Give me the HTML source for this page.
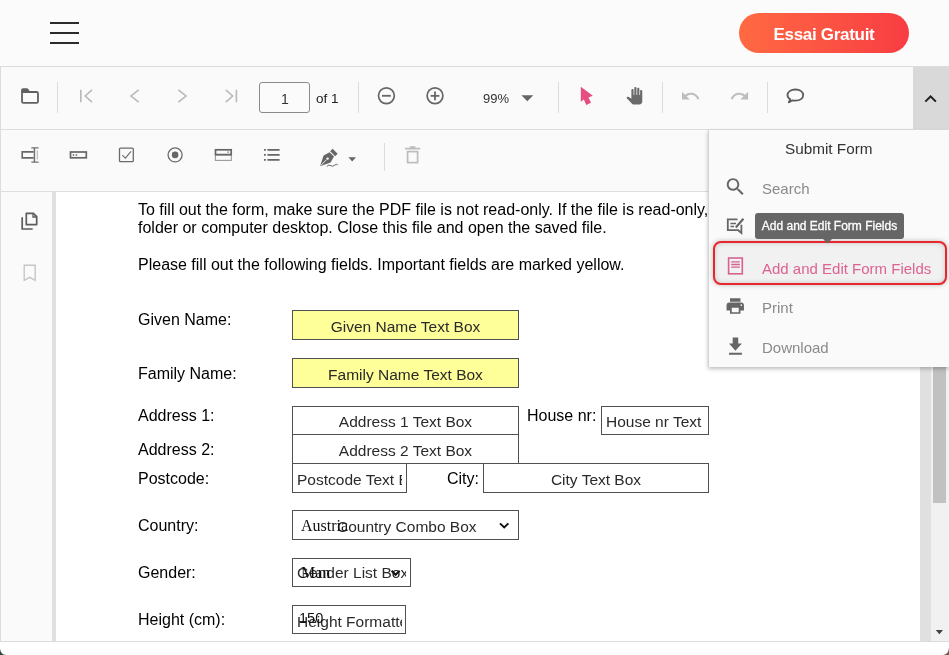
<!DOCTYPE html>
<html lang="en">
<head>
<meta charset="utf-8">
<title>PDF Form Editor</title>
<style>
*{box-sizing:border-box;margin:0;padding:0}
html,body{width:949px;height:655px;overflow:hidden;background:#fff;font-family:"Liberation Sans",sans-serif;}
body{position:relative}
.abs{position:absolute}
#header{left:0;top:0;width:949px;height:66px;background:#fbfbfb}
#hline{left:0;top:66px;width:949px;height:1px;background:#dcdcdc}
.bar{position:absolute;background:#fff;height:2px;left:50px;width:29px;background:#2b2b2b}
#cta{left:739px;top:13px;width:170px;height:40px;border-radius:20px;background:linear-gradient(90deg,#ff6a42 0%,#f83d43 100%);color:#fff;font-weight:bold;font-size:17px;text-align:center;line-height:43.400px;letter-spacing:-0.300px}
#tb1{left:0;top:67px;width:949px;height:62px;background:#fafafa;border-left:1px solid #dcdcdc}
#tb1line{left:0;top:129px;width:949px;height:1px;background:#dedede}
#tb2{left:0;top:130px;width:949px;height:61px;background:#fafafa;border-left:1px solid #dcdcdc}
#tb2line{left:0;top:191px;width:949px;height:1px;background:#dedede}
#side{left:0;top:192px;width:52px;height:449px;background:#fafafa;border-left:1px solid #dcdcdc}
#sideb{left:52px;top:192px;width:4px;height:449px;background:#e0e0e0}
#page{left:56px;top:192px;width:864px;height:449px;background:#fff;overflow:hidden}
#gutter{left:920px;top:192px;width:11px;height:449px;background:#e0e0e0}
#sbar{left:931px;top:192px;width:18px;height:449px;background:#f1f1f1}
#thumb{left:933px;top:191px;width:13px;height:312px;background:#c1c1c1}
#bline{left:0;top:641px;width:949px;height:1px;background:#dcdcdc}
#bottom{left:0;top:642px;width:949px;height:13px;background:#fff}
.sep{position:absolute;width:1px;background:#d9d9d9}
.pt{position:absolute;font-size:16px;color:#000;white-space:nowrap;line-height:18px}
.fld{position:absolute;border:1px solid #505050;background:#fff;font-family:"Liberation Sans",sans-serif;font-size:15.500px;color:#2a2a2a;padding-top:1px;white-space:nowrap;overflow:hidden;text-align:center}
.yl{background:#ffff99}
.ov{position:absolute;white-space:nowrap;color:#111;font-family:"Liberation Serif",serif;font-size:16px;line-height:16px}
#more{left:913px;top:67px;width:36px;height:62px;background:#d9d9d9}
#menu{left:708px;top:130px;width:241px;height:237px;background:#fafafa;border-left:1px solid #d4d4d4;box-shadow:0 2px 4px rgba(0,0,0,.25)}
.mi{position:absolute;left:52px;font-size:15px;color:#8a8a8a;white-space:nowrap}
#tip{left:755px;top:213px;width:149px;height:26px;background:#666;border-radius:3px;color:#fff;font-size:12px;-webkit-text-stroke:0.300px #fff;line-height:26px;text-align:center;white-space:nowrap}
#hl{left:713px;top:241px;width:234px;height:44px;border:2px solid #e8262b;border-radius:8px;background:#f1f1f1;box-shadow:0 0 5px rgba(0,0,0,.25), inset 0 0 5px rgba(0,0,0,.18)}
</style>
</head>
<body>
<div id="wrap" style="position:absolute;left:0;top:0;width:949px;height:655px;overflow:hidden;will-change:transform">
<div class="abs" id="header"></div>
<div class="bar" style="top:22px"></div>
<div class="bar" style="top:32px"></div>
<div class="bar" style="top:42px"></div>
<div class="abs" id="cta">Essai Gratuit</div>
<div class="abs" id="hline"></div>

<div class="abs" id="tb1"></div>
<div class="abs" id="tb1line"></div>
<div class="abs" id="tb2"></div>
<div class="abs" id="tb2line"></div>

<div class="abs" id="side"></div>
<div class="abs" id="sideb"></div>
<div class="abs" id="page"></div>
<div class="abs" id="gutter"></div>
<div class="abs" id="sbar"></div>
<div class="abs" id="thumb"></div>
<div class="abs" id="bline"></div>
<div class="abs" id="bottom"></div>


<div class="pt" style="left:138px;top:201px">To fill out the form, make sure the PDF file is not read-only. If the file is read-only, save it first to a</div>
<div class="pt" style="left:138px;top:219px">folder or computer desktop. Close this file and open the saved file.</div>
<div class="pt" style="left:138px;top:256px">Please fill out the following fields. Important fields are marked yellow.</div>
<div class="pt" style="left:138px;top:311px">Given Name:</div>
<div class="pt" style="left:138px;top:364.500px">Family Name:</div>
<div class="pt" style="left:138px;top:406.500px">Address 1:</div>
<div class="pt" style="left:138px;top:440.500px">Address 2:</div>
<div class="pt" style="left:138px;top:469.500px">Postcode:</div>
<div class="pt" style="left:138px;top:516.800px">Country:</div>
<div class="pt" style="left:138px;top:563.800px">Gender:</div>
<div class="pt" style="left:138px;top:610.800px">Height (cm):</div>
<div class="pt" style="left:527px;top:406.600px">House nr:</div>
<div class="pt" style="left:447px;top:469.800px">City:</div>

<div class="fld yl" style="left:292px;top:310px;width:227px;height:30px;line-height:30px">Given Name Text Box</div>
<div class="fld yl" style="left:292px;top:358px;width:227px;height:30px;line-height:30px">Family Name Text Box</div>
<div class="fld" style="left:292px;top:405.500px;width:227px;height:29.500px;line-height:29px;padding-top:0">Address 1 Text Box</div>
<div class="fld" style="left:292px;top:434px;width:227px;height:30px;line-height:30px">Address 2 Text Box</div>
<div class="fld" style="left:292px;top:463px;width:115px;height:30px;line-height:30px;text-align:left;padding-left:4px"><div style="width:105px;overflow:hidden">Postcode Text Box</div></div>
<div class="fld" style="left:601px;top:405.500px;width:108px;height:29.500px;line-height:29px;padding-top:0;text-align:left;padding-left:4px"><div style="width:97px;overflow:hidden">House nr Text Box</div></div>
<div class="fld" style="left:483px;top:463px;width:226px;height:30px;line-height:30px">City Text Box</div>
<div class="fld" style="left:292px;top:510px;width:227px;height:30px;line-height:30px;text-align:left;padding-left:44px">Country Combo Box</div>
<div class="fld" style="left:292px;top:558px;width:119px;height:29px;line-height:28px;padding-top:0;text-align:left;padding-left:4px"><div style="width:109px;overflow:hidden">Gender List Box</div></div>
<div class="fld" style="left:292px;top:605px;width:114px;height:29px;line-height:29px;padding-top:1px;text-align:left;padding-left:4px"><div style="width:105px;overflow:hidden">Height Formatted</div></div>

<div class="ov" style="left:301px;top:517.600px">Austria</div>
<div class="ov" style="left:301px;top:565px">Man</div>
<div class="ov" style="left:299px;top:610.300px;font-size:14.500px;font-family:'Liberation Sans',sans-serif">150</div>
<svg class="abs" style="left:0;top:0" width="949" height="655" viewBox="0 0 949 655" fill="none"><path d="M500 523.400L504.200 527.400L508.400 523.400M391.600 570.800L395.600 574.800L399.600 570.800" stroke="#111" stroke-width="2"/></svg>
<!--PDFTEXT-->


<svg class="abs" style="left:0;top:0" width="949" height="655" viewBox="0 0 949 655" fill="none">
<!-- row 1 separators -->
<g stroke="#dcdcdc" stroke-width="1">
<path d="M57.5 82V113M358.5 82V113M558.5 82V113M662.5 82V113M767.5 82V113M384.5 143V171"/>
</g>
<!-- folder -->
<path d="M22 92H36.600Q38 92 38 93.400V101.400Q38 102.800 36.600 102.800H23.400Q22 102.800 22 101.400Z" stroke="#606060" stroke-width="1.800" stroke-linejoin="round"/>
<path d="M21.100 92V90Q21.100 88.300 23 88.300H26.800Q27.800 88.300 28.400 89.200L30.200 92Z" fill="#606060"/>
<!-- nav arrows -->
<g stroke="#b9b9b9" stroke-width="1.6" stroke-linecap="butt">
<path d="M80.800 89.700V102.300M92 89.900L85.200 96L92 102.100"/>
<path d="M138.600 89.900L131 96L138.600 102.100"/>
<path d="M178.400 89.900L186 96L178.400 102.100"/>
<path d="M225.800 89.900L232.600 96L225.800 102.100M236.400 89.700V102.300"/>
</g>
<!-- page input -->
<rect x="259.500" y="82.500" width="50" height="30" rx="2.500" fill="#fbfbfb" stroke="#8a8a8a"/>
<!-- zoom out / in -->
<g stroke="#666" stroke-width="1.700">
<circle cx="386.400" cy="95.800" r="7.900"/><path d="M382 95.800H390.800" stroke-width="1.800"/>
<circle cx="435" cy="95.800" r="7.900"/><path d="M430.600 95.800H439.400M435 91.400V100.200" stroke-width="1.800"/>
</g>
<path d="M521.300 95.300H533.300L527.300 101.300Z" fill="#666"/>
<!-- select cursor -->
<path d="M580.800 86.800L580.800 101.800L583.800 99.600L586.300 104.900L591 102.700L588.500 97.600L592.800 95.800Z" fill="#e64d80"/>
<!-- hand -->
<g transform="translate(625.600 87.100) scale(0.725)"><path fill="#6a6a6a" d="M23 5.500V20c0 2.200-1.800 4-4 4h-7.300c-1.080 0-2.100-.43-2.850-1.190L1 14.830s1.260-1.230 1.300-1.250c.22-.19.490-.29.790-.29.220 0 .42.060.6.160.040.010 4.310 2.460 4.310 2.460V4c0-.83.670-1.500 1.500-1.500S11 3.170 11 4v7h1V1.500c0-.83.670-1.500 1.500-1.500S15 .67 15 1.500V11h1V2.500c0-.83.670-1.500 1.500-1.500s1.500.67 1.500 1.500V11h1V5.500c0-.83.670-1.500 1.500-1.500s1.500.67 1.500 1.500z"/></g>
<!-- undo / redo -->
<g transform="translate(680.300 85.850) scale(0.85)"><path fill="#bdbdbd" d="M12.500 8c-2.650 0-5.050.99-6.900 2.600L2 7v9h9l-3.620-3.620c1.390-1.160 3.160-1.880 5.120-1.880 3.540 0 6.550 2.310 7.600 5.500l2.370-.78C21.080 11.030 17.150 8 12.500 8z"/></g>
<g transform="translate(729.400 85.850) scale(0.85)"><path fill="#bdbdbd" d="M18.400 10.600C16.550 8.990 14.150 8 11.500 8c-4.650 0-8.580 3.030-9.960 7.220L3.900 16c1.050-3.190 4.050-5.500 7.600-5.500 1.950 0 3.730.72 5.120 1.880L13 16h9V7l-3.600 3.600z"/></g>
<!-- comment -->
<path d="M795.400 89.500C800.200 89.500 803.200 92 803.200 95.100C803.200 98.300 800.200 100.700 795.400 100.700C794.300 100.700 793.300 100.600 792.400 100.300L788.800 102.400L790.200 99.300C788.500 98.300 787.500 96.800 787.500 95.100C787.500 92 790.600 89.500 795.400 89.500Z" stroke="#5c5c5c" stroke-width="1.800" stroke-linejoin="round"/>
<!-- row 2 : text field -->
<g stroke="#666" stroke-width="1.700">
<path d="M33.600 151.900H22.200V157.900H33.600" stroke-width="1.600"/>
<path d="M34.400 148V162" stroke="#707070" stroke-width="1.500"/>
<path d="M31.300 147.900H38.600M31.300 162.100H38.600" stroke="#707070" stroke-width="1.200"/>
<path d="M37.300 150.500V159.500" stroke="#a0a0a0" stroke-width="0.800"/>
<!-- password -->
<rect x="70.500" y="152" width="15.800" height="5.800"/>
<path d="M72.700 155H74.200M75.700 155H77.200" stroke-width="1.400"/>
</g>
<!-- checkbox -->
<rect x="119.500" y="148.100" width="13.800" height="13.600" rx="1" stroke="#6a6a6a" stroke-width="1.300"/>
<path d="M122.300 155.200L125.400 158.200L131 151.400" stroke="#6a6a6a" stroke-width="1.100"/>
<!-- radio -->
<circle cx="175.100" cy="154.900" r="7" stroke="#6a6a6a" stroke-width="1.300"/>
<circle cx="175.100" cy="154.900" r="3.300" fill="#666"/>
<!-- dropdown -->
<rect x="215.400" y="155" width="15.900" height="5.400" stroke="#9a9a9a" stroke-width="1.100"/>
<rect x="215.500" y="149.800" width="15.700" height="4.800" stroke="#666" stroke-width="1.700"/>
<path d="M227.200 152.200H229" stroke="#888" stroke-width="1.200"/>
<!-- list -->
<g stroke="#666" stroke-width="1.700">
<path d="M264 149.800H265.800M267.400 149.800H279.600M264 154.900H265.800M267.400 154.900H279.600M264 159.900H265.800M267.400 159.900H279.600"/>
</g>
<!-- signature pen -->
<path d="M320 166.200L323.600 155.600L329.600 152.200L334 156.600L330.600 162.600Z" fill="#666"/>
<path d="M320.600 165.600L326.600 159.600" stroke="#fafafa" stroke-width="0.900"/>
<circle cx="327.600" cy="158.600" r="1.200" fill="#fafafa"/>
<path d="M330.200 151.200L332.600 148.800L337.600 153.800L335.200 156.200Z" fill="#666"/>
<path d="M326.800 166.400Q328.800 164.200 330.800 165.600T334.600 165.200T337.800 165" stroke="#666" stroke-width="1"/>
<path d="M348.400 157.200H356L352.200 161.500Z" fill="#666"/>
<!-- trash -->
<g stroke="#bdbdbd" stroke-width="1.700">
<path d="M405 148.600H420.200M409.800 147.200H415.400"/>
<rect x="407.600" y="151.600" width="10" height="11"/>
</g>
<!-- sidebar icons -->
<g stroke="#5c5c5c" stroke-width="1.700">
<path d="M22.200 217.200V229H32.700"/>
<path d="M26.300 213.400H33.400L36.700 216.700V224.600H26.300Z" stroke-linejoin="round"/>
<path d="M33 213.600V217H36.600" stroke-width="1.300"/>
</g>
<path d="M24.200 265.300H35.200V280.300L29.700 277.300L24.200 280.300Z" stroke="#c6c6c6" stroke-width="1.400"/>
<!-- scrollbar arrow -->
<path d="M935.800 630H943L939.400 634.200Z" fill="#404040"/>
<!-- window corners -->
<path d="M0 655V648.500Q0.500 654.500 6 655Z" fill="#2f4540"/>
<path d="M949 655V647.500Q948.500 654.500 943 655Z" fill="#6b5d56"/>
</svg>
<div class="abs" style="left:260px;top:89.500px;width:50px;text-align:center;font-size:14px;color:#333;line-height:18px">1</div>
<div class="abs" style="left:316px;top:89.500px;font-size:13.500px;color:#222;line-height:18px;white-space:nowrap">of 1</div>
<div class="abs" style="left:483px;top:89.500px;font-size:13px;color:#333;line-height:18px;white-space:nowrap">99%</div>
<!--TOOLBAR-->

<div class="abs" id="more"></div>
<div class="abs" id="menu"></div>

<div class="abs" id="hl"></div>
<svg class="abs" style="left:0;top:0" width="949" height="655" viewBox="0 0 949 655" fill="none">
<!-- more chevron -->
<g transform="translate(918.600 86.900)"><path fill="#1f1f1f" d="M7.410 15.410L12 10.830l4.590 4.580L18 14l-6-6-6 6z"/></g>
<!-- search -->
<g transform="translate(723.900 175.300) scale(0.960)"><path fill="#666" d="M15.500 14h-.79l-.28-.27C15.410 12.590 16 11.110 16 9.500 16 5.910 13.090 3 9.500 3S3 5.910 3 9.500 5.910 16 9.500 16c1.610 0 3.090-.59 4.230-1.570l.27.280v.79l5 4.990L20.490 19l-4.990-5zm-6 0C7.010 14 5 11.990 5 9.500S7.010 5 9.500 5 14 7.010 14 9.500 11.990 14 9.500 14z"/></g>
<!-- edit annotation -->
<g stroke="#666" stroke-width="1.800" transform="translate(0 -1.200)">
<path d="M737.500 220.600H727.800V231.400H738.200L741.400 234.200V226"/>
<path d="M730.400 224.600H736M730.400 227.600H734" stroke-width="1.500"/>
<path d="M735.800 228.600L743.400 220" stroke-width="2.200"/>
</g>
<!-- form fields (pink) -->
<rect x="728.600" y="258" width="13.700" height="15.800" stroke="#d8628f" stroke-width="1.600"/>
<path d="M731.200 261.800H739.800M731.200 264.500H739.800M731.200 267.200H739.800" stroke="#d8628f" stroke-width="1.300"/>
<!-- print -->
<g transform="translate(724.800 295.600) scale(0.870)"><path fill="#666" d="M19 8H5c-1.660 0-3 1.340-3 3v6h4v4h12v-4h4v-6c0-1.660-1.340-3-3-3zm-3 11H8v-5h8v5zm3-7c-.55 0-1-.45-1-1s.45-1 1-1 1 .45 1 1-.45 1-1 1zm-1-9H6v4h12V3z"/></g>
<!-- download -->
<g transform="translate(724.400 334.400) scale(0.920 1.020)"><path fill="#666" d="M19 9h-4V3H9v6H5l7 7 7-7zM5 18v2h14v-2H5z"/></g>
<!-- tooltip arrow -->
<path d="M822.500 238.500H832.500L827.500 243.500Z" fill="#666"/>
</svg>
<div class="abs" style="left:785px;top:139px;font-size:15.300px;color:#333;line-height:20px;white-space:nowrap">Submit Form</div>
<div class="mi" style="left:762px;top:179px;line-height:20px">Search</div>
<div class="mi" style="left:762px;top:259px;line-height:20px;color:#dd6293">Add and Edit Form Fields</div>
<div class="mi" style="left:762px;top:298px;line-height:20px">Print</div>
<div class="mi" style="left:762px;top:338px;line-height:20px">Download</div>
<div class="abs" id="tip">Add and Edit Form Fields</div>
<!--MENU-->
</div>
</body>
</html>
